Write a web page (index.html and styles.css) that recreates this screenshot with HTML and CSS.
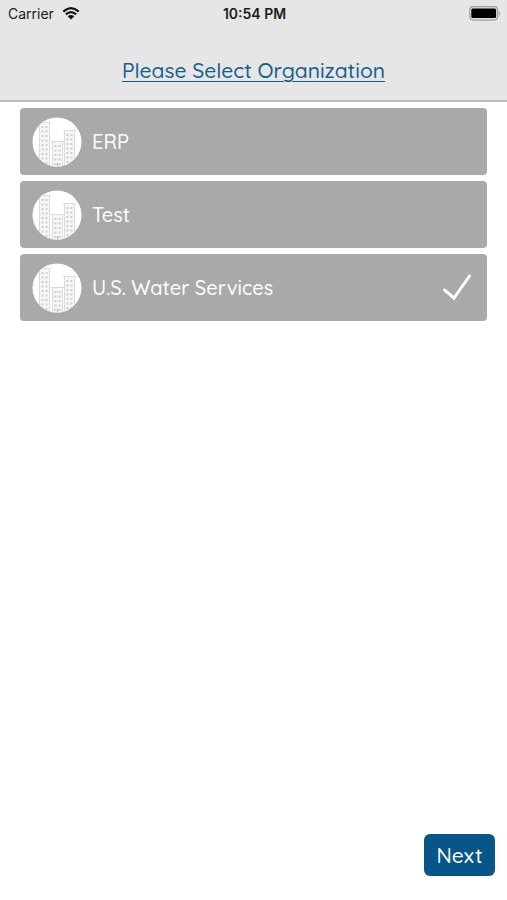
FILE: index.html
```html
<!DOCTYPE html>
<html lang="en">
<head>
<meta charset="utf-8">
<meta name="viewport" content="width=device-width, initial-scale=1">
<title>Please Select Organization</title>
<link rel="stylesheet" href="styles.css">
</head>
<body>
<svg class="defs" width="0" height="0" aria-hidden="true">
  <defs>
    <clipPath id="disc"><circle cx="25" cy="25" r="24.5"/></clipPath>
    <symbol id="buildings" viewBox="0 0 50 50">
      <circle cx="25" cy="25" r="24.5" fill="#fff"/>
      <g clip-path="url(#disc)" fill="#f6f6f6" stroke="#dcdcdc">
        <path d="M7.500 50V5.500H17.500V50M32.500 50V13.500H42.500V50M20.500 50V24.500H30.500V50"/>
        <path d="M5 5.500H19M31 13.500H44M19 24.500H32" fill="none"/>
        <g fill="none" stroke="#cfcfcf" stroke-width="2" stroke-dasharray="2 2.500">
          <path d="M10.500 9V50M14.500 9V50M35.500 17V50M39.500 17V50M23.500 28V50M27.500 28V50"/>
        </g>
        <path d="M25.500 46V50" fill="none" stroke="#bbb"/>
      </g>
    </symbol>
  </defs>
</svg>
<div class="screen">
  <header class="header">
    <div class="status">
      <div class="carrier">
        <span>Carrier</span>
        <svg width="18" height="13" viewBox="0 0 18 13" aria-hidden="true">
          <path d="M1.300 4.600Q9-2.200 16.700 4.600M3.900 7.300Q9 2.900 14.100 7.300" fill="none" stroke="#111" stroke-width="2.200"/>
          <path d="M5.700 9.200Q9 6.600 12.300 9.200L9 12.500Z" fill="#111"/>
        </svg>
      </div>
      <time class="clock">10:54 PM</time>
      <svg class="battery" width="32" height="15" viewBox="0 0 32 15" aria-hidden="true">
        <rect x=".7" y=".7" width="28" height="13.400" rx="3.500" fill="#ddd" stroke="#a2a2a2" stroke-width="1.200"/>
        <rect x="2.300" y="2.500" width="24.800" height="9.600" rx="1.500" fill="#000"/>
        <path d="M30 5Q32 7.400 30 10Z" fill="#999"/>
      </svg>
    </div>
    <h1 class="title">Please Select Organization</h1>
  </header>
  <main class="list">
    <label class="row">
      <input type="radio" name="organization">
      <svg class="avatar" aria-hidden="true"><use href="#buildings"/></svg>
      <span class="name">ERP</span>
      <svg class="check" viewBox="0 0 28 27" aria-hidden="true"><path d="M1.500 16L11 24L26.500 2"/></svg>
    </label>
    <label class="row">
      <input type="radio" name="organization">
      <svg class="avatar" aria-hidden="true"><use href="#buildings"/></svg>
      <span class="name">Test</span>
      <svg class="check" viewBox="0 0 28 27" aria-hidden="true"><path d="M1.500 16L11 24L26.500 2"/></svg>
    </label>
    <label class="row">
      <input type="radio" name="organization" checked>
      <svg class="avatar" aria-hidden="true"><use href="#buildings"/></svg>
      <span class="name">U.S. Water Services</span>
      <svg class="check" viewBox="0 0 28 27" aria-hidden="true"><path d="M1.500 16L11 24L26.500 2"/></svg>
    </label>
  </main>
  <footer class="footer">
    <button class="next" type="button">Next</button>
  </footer>
</div>
</body>
</html>
```
FILE: styles.css
```css
* {
  box-sizing: border-box;
}

body {
  margin: 0;
  background: #fff;
  font-family: Quicksand, Lato, sans-serif;
  font-weight: 500;
}

.defs {
  position: absolute;
}

.screen {
  display: flex;
  flex-direction: column;
  min-height: 100vh;
}

.header {
  background: #e6e6e6;
  border-bottom: 2px solid #bdbdbd;
  padding-bottom: 16px;
}

.status {
  display: grid;
  grid-template-columns: 1fr auto 1fr;
  align-items: center;
  height: 26px;
  padding: 0 6px 0 8px;
  color: #1c1c1c;
  font-family: Inter, sans-serif;
  font-size: 14px;
  font-weight: 400;
}

.carrier {
  display: flex;
  align-items: center;
  gap: 8px;
}

.clock {
  font-weight: 600;
}

.battery {
  justify-self: end;
}

.title {
  margin: 30px 0 0;
  color: #14608c;
  font-size: 21px;
  font-weight: 500;
  line-height: 28px;
  text-align: center;
  text-decoration: underline;
  text-decoration-thickness: 1px;
  text-underline-offset: 3px;
}

.list {
  display: flex;
  flex: 1;
  flex-direction: column;
  gap: 6px;
  padding: 6px 20px;
}

.row {
  display: flex;
  align-items: center;
  gap: 10px;
  min-height: 67px;
  padding: 0 16px 0 12px;
  border-radius: 4px;
  background: #a9a9a9;
  color: #fff;
  cursor: pointer;
}

.row input {
  position: absolute;
  opacity: 0;
}

.row:has(input:focus-visible) {
  outline: 2px solid #14608c;
}

.avatar {
  flex: none;
  width: 50px;
  height: 50px;
}

.name {
  flex: 1;
  font-size: 20px;
  line-height: 26px;
}

.check {
  width: 28px;
  height: 27px;
  fill: none;
  stroke: #fff;
  stroke-width: 3;
  stroke-linecap: round;
  visibility: hidden;
}

.row input:checked ~ .check {
  visibility: visible;
}

.footer {
  display: flex;
  justify-content: flex-end;
  padding: 0 12px 24px;
}

.next {
  min-width: 71px;
  height: 42px;
  padding: 0 12px;
  border: 0;
  border-radius: 6px;
  background: #085587;
  color: #fff;
  font: inherit;
  font-size: 21px;
}
```
